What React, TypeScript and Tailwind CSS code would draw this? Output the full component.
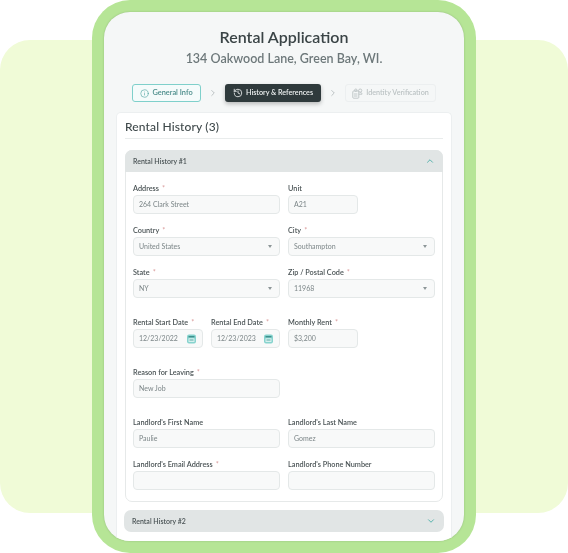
import React from "react";
import { ChevronRight, ChevronUp, ChevronDown, Info, History } from "lucide-react";

const Req = () => <span className="ml-[3px] text-[#dba0a0]">*</span>;

function Label({ text, req }: { text: string; req?: boolean }) {
  return (
    <div className="h-[12px] text-[7.3px] leading-[12px] font-semibold text-[#4a5355] whitespace-nowrap">
      {text}
      {req && <Req />}
    </div>
  );
}

function DateIcon() {
  return (
    <svg width="9" height="10" viewBox="0 0 9 10" className="shrink-0">
      <rect x="0" y="0.5" width="9" height="9" rx="2" fill="#86d3ce" />
      <rect x="1.5" y="2" width="6" height="1.4" fill="#3f8f8c" />
      <rect x="1.5" y="4.2" width="6" height="3.8" rx="0.6" fill="#d6f0ee" />
      <rect x="2.5" y="5.5" width="4" height="1" fill="#5aa9a5" />
    </svg>
  );
}

function IdentityIcon() {
  return (
    <svg width="11" height="11" viewBox="0 0 11 11" fill="none" stroke="#bcc3c4" strokeWidth="0.9" className="shrink-0">
      <rect x="0.8" y="3" width="6" height="7.2" rx="0.8" />
      <circle cx="8.2" cy="2.6" r="1.6" />
      <path d="M2 6h3.4M2 8h3.4" />
      <path d="M6.8 6.2h3.2c0-1.2-.8-1.9-1.8-1.9" />
      <circle cx="3.8" cy="2.2" r="1.2" />
    </svg>
  );
}

function Field({
  label,
  value,
  req,
  w,
  select,
  date,
}: {
  label: string;
  value?: string;
  req?: boolean;
  w: string;
  select?: boolean;
  date?: boolean;
}) {
  return (
    <div className={`flex flex-col ${w}`}>
      <Label text={label} req={req} />
      <div className="flex h-[19px] items-center justify-between rounded-[4px] border border-[#e4e8e8] bg-[#f8f9f9] pl-[5px] pr-[6px] text-[7px] text-[#7c8688]">
        <span>{value}</span>
        {select && <span className="mr-[1px] h-0 w-0 border-x-[2.5px] border-t-[3px] border-x-transparent border-t-[#8d9698]" />}
        {date && <DateIcon />}
      </div>
    </div>
  );
}

export default function App() {
  return (
    <div className="relative h-[553px] w-[568px] overflow-hidden bg-white font-['Lato',sans-serif]">
      <div className="absolute inset-x-0 top-[40px] h-[473px] rounded-[30px] bg-[#f0fbd7]" />
      <div className="relative mx-auto h-[553px] w-[384px] rounded-[38px] bg-[#b6e596] p-[12px]">
        <div className="flex h-[529px] flex-col overflow-hidden rounded-[26px] bg-[#f5f7f7] shadow-[0_0_2px_#8fb57a] blur-[0.3px]">
          <div className="pt-[14px] text-center text-[16px] leading-[22px] font-semibold text-[#3a4446]">Rental Application</div>
          <div className="mt-[1px] text-center text-[12.5px] leading-[20px] font-semibold text-[#6d787a]">
            134 Oakwood Lane, Green Bay, WI.
          </div>

          <div className="mt-[15px] ml-[28px] flex h-[18px] items-center">
            <div className="flex h-[18px] w-[69px] items-center justify-center gap-[3px] rounded-[3px] border border-[#7fd0cb] bg-[#f5fbfb] text-[7.4px] font-semibold text-[#4b8d8b]">
              <Info size={9} strokeWidth={1.5} className="text-[#3f9c98]" />
              General Info
            </div>
            <ChevronRight size={10} strokeWidth={1.5} className="mx-[7px] text-[#9aa3a5]" />
            <div className="flex h-[18px] w-[96px] items-center justify-center gap-[3px] rounded-[3px] bg-[#2f3a3c] text-[7.2px] font-semibold text-[#eef1f1] shadow-[0_2px_4px_rgba(0,0,0,0.25)]">
              <History size={10} strokeWidth={2} />
              History &amp; References
            </div>
            <ChevronRight size={10} strokeWidth={1.5} className="mx-[7px] text-[#9aa3a5]" />
            <div className="flex h-[18px] w-[91px] items-center justify-center gap-[3px] rounded-[3px] border border-[#eceff0] bg-[#f5f7f7] text-[7.2px] font-semibold text-[#bcc3c4]">
              <IdentityIcon />
              Identity Verification
            </div>
          </div>

          <div className="mx-[12px] mt-[10px] flex-1 rounded-t-[5px] border-x border-t border-[#eceff0] bg-white px-[8px]">
            <div className="h-[26px] border-b border-[#e9ecec] pt-[6px] text-[12px] leading-[16px] font-medium tracking-[0.15px] text-[#3f494b]">
              Rental History (3)
            </div>

            <div className="mt-[11px] rounded-[7px] border border-[#e6e9e9]">
              <div className="-mt-px -mx-px flex h-[22px] items-center justify-between rounded-t-[7px] bg-[#e1e5e5] pl-[8px] pr-[8px] text-[7px] font-semibold text-[#4a5355]">
                Rental History #1
                <ChevronUp size={10} strokeWidth={2} className="text-[#3fa9a2]" />
              </div>
              <div className="flex flex-col gap-[11px] px-[7px] pt-[11px] pb-[11px]">
                <div className="flex gap-[8px]">
                  <Field label="Address" req value="264 Clark Street" w="w-[147px]" />
                  <Field label="Unit" value="A21" w="w-[70px]" />
                </div>
                <div className="flex gap-[8px]">
                  <Field label="Country" req value="United States" w="w-[147px]" select />
                  <Field label="City" req value="Southampton" w="w-[147px]" select />
                </div>
                <div className="flex gap-[8px]">
                  <Field label="State" req value="NY" w="w-[147px]" select />
                  <Field label="Zip / Postal Code" req value="11968" w="w-[147px]" select />
                </div>
                <div className="mt-[8px] flex gap-[8px]">
                  <Field label="Rental Start Date" req value="12/23/2022" w="w-[70px]" date />
                  <Field label="Rental End Date" req value="12/23/2023" w="w-[69px]" date />
                  <Field label="Monthly Rent" req value="$3,200" w="w-[70px]" />
                </div>
                <div className="mt-[8px] flex gap-[8px]">
                  <Field label="Reason for Leaving" req value="New Job" w="w-[147px]" />
                </div>
                <div className="mt-[8px] flex gap-[8px]">
                  <Field label="Landlord's First Name" value="Paulie" w="w-[147px]" />
                  <Field label="Landlord's Last Name" value="Gomez" w="w-[147px]" />
                </div>
                <div className="flex gap-[8px]">
                  <Field label="Landlord's Email Address" req w="w-[147px]" />
                  <Field label="Landlord's Phone Number" w="w-[147px]" />
                </div>
              </div>
            </div>

            <div className="-mx-[1px] mt-[8px] flex h-[22px] items-center justify-between rounded-[7px] bg-[#e1e5e5] pl-[8px] pr-[8px] text-[7px] font-semibold text-[#4a5355]">
              Rental History #2
              <ChevronDown size={10} strokeWidth={2} className="text-[#3fa9a2]" />
            </div>
          </div>
        </div>
      </div>
    </div>
  );
}
